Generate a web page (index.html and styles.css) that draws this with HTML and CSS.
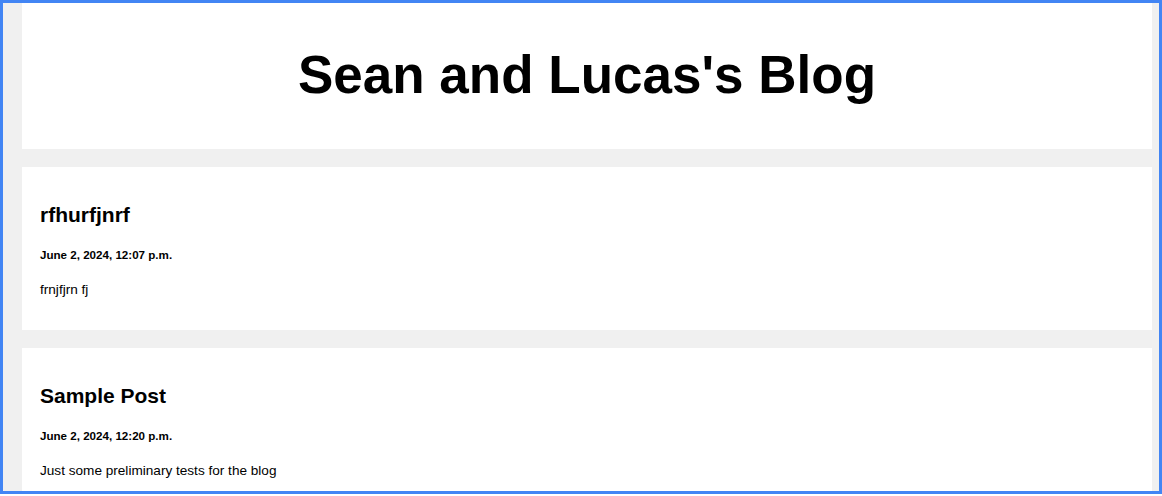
FILE: index.html
```html
<!DOCTYPE html>
<html lang="en">
<head>
<meta charset="utf-8">
<title>Sean and Lucas's Blog</title>
<link rel="stylesheet" href="styles.css">
</head>
<body>
<div class="frame">
  <header class="site-header">
    <h1 class="site-title">Sean and Lucas's Blog</h1>
  </header>
  <main class="posts">
    <article class="post">
      <h2 class="post-title">rfhurfjnrf</h2>
      <p class="post-date">June 2, 2024, 12:07 p.m.</p>
      <p class="post-body">frnjfjrn fj</p>
    </article>
    <article class="post">
      <h2 class="post-title">Sample Post</h2>
      <p class="post-date">June 2, 2024, 12:20 p.m.</p>
      <p class="post-body">Just some preliminary tests for the blog</p>
    </article>
  </main>
</div>
</body>
</html>
```

FILE: styles.css
```css
html, body {
  margin: 0;
  padding: 0;
  background: #ffffff;
}

body {
  font-family: "Liberation Sans", Arial, sans-serif;
  color: #000;
}

.frame {
  box-sizing: border-box;
  height: 494px;
  border: 3px solid #4285f4;
  background: #f0f0f0;
  padding: 0 7px 0 19px;
  overflow: hidden;
  display: flex;
  flex-direction: column;
  gap: 18px;
}

.site-header {
  background: #fff;
  padding: 41px 20px 44px;
  text-align: center;
  flex-shrink: 0;
}

.site-title {
  margin: 0;
  font-size: 53px;
  line-height: 61px;
  font-weight: bold;
}

.posts {
  display: flex;
  flex-direction: column;
  gap: 18px;
}

.post {
  background: #fff;
  padding: 36px 18px 32px;
  display: flex;
  flex-direction: column;
}

.post-title {
  margin: 0;
  font-size: 21px;
  line-height: 24px;
  font-weight: bold;
}

.post-date {
  margin: 21px 0 0;
  font-size: 11.6px;
  line-height: 14px;
  font-weight: bold;
}

.post-body {
  margin: 20px 0 0;
  font-size: 13.6px;
  line-height: 16px;
}
```
